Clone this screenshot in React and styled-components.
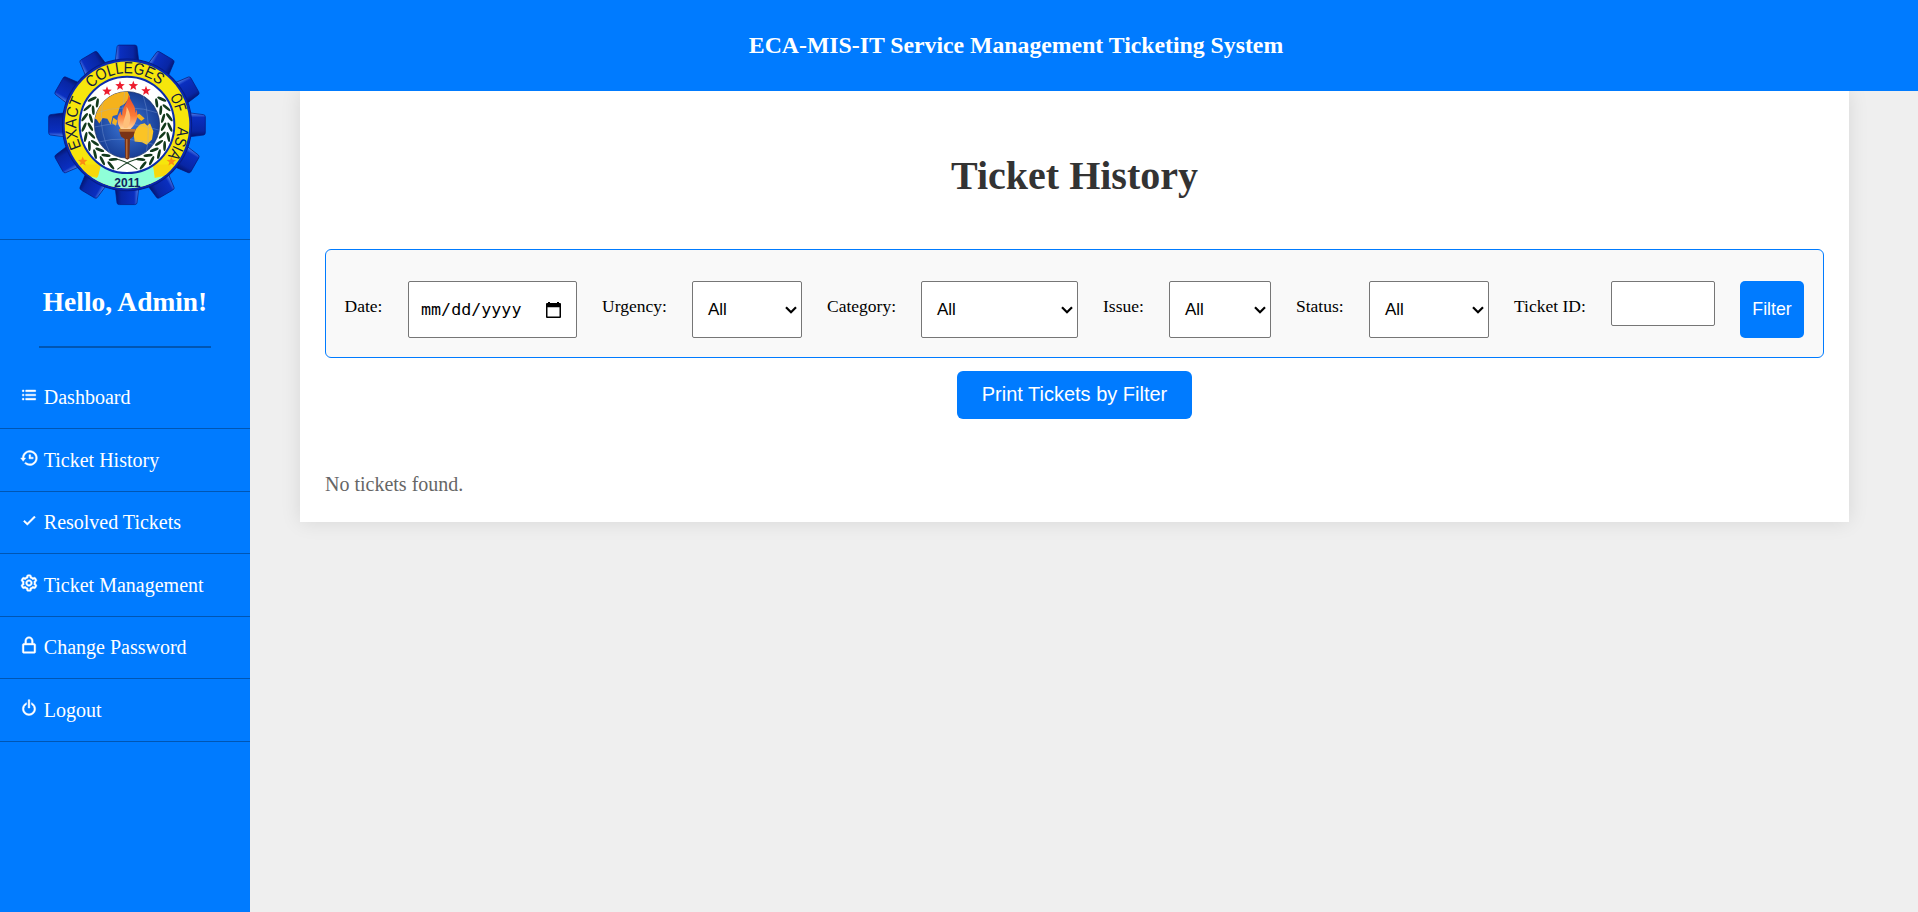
import React from 'react';
import styled, { createGlobalStyle } from 'styled-components';
import { BiListUl, BiHistory, BiCheck, BiCog, BiLockAlt, BiPowerOff } from 'react-icons/bi';

const GlobalStyle = createGlobalStyle`
  *, *::before, *::after { box-sizing: border-box; }
  html, body { margin: 0; padding: 0; }
  body {
    background: #efefef;
    font-family: 'Liberation Serif', 'Times New Roman', serif;
    overflow: hidden;
  }
`;

const Layout = styled.div`
  display: flex;
  height: 100vh;
`;

const Sidebar = styled.aside`
  width: 250px;
  flex: none;
  background: #007bff;
  color: #fff;
`;

const LogoArea = styled.div`
  height: 240px;
  padding: 40px 0 0 45px;
  border-bottom: 1px solid #0056b3;
`;

const Greeting = styled.h2`
  width: 172px;
  height: 108px;
  margin: 0 auto 18.5px;
  padding-top: 46px;
  border-bottom: 2px solid #0056b3;
  font-size: 27.4px;
  line-height: 32px;
  text-align: center;
  white-space: nowrap;
`;

const Nav = styled.nav`
  display: flex;
  flex-direction: column;
`;

const NavItem = styled.a`
  display: flex;
  gap: 4.8px;
  height: 62.5px;
  padding: 18.8px 19px 0;
  border-bottom: 1px solid #0056b3;
  font-size: 20px;
  line-height: 24px;
  color: #fff;
  white-space: nowrap;

  svg { width: 20px; height: 20px; flex: none; stroke: #fff; stroke-width: 0.5px; }
`;

const Main = styled.main`
  flex: 1;
  min-width: 0;
`;

const Header = styled.header`
  height: 91px;
  padding: 0 136px 2px 0;
  display: flex;
  align-items: center;
  justify-content: center;
  background: #007bff;
  color: #fff;
`;

const HeaderTitle = styled.h1`
  margin: 0;
  font-size: 23.75px;
  line-height: 28px;
`;

const Panel = styled.section`
  height: 431px;
  margin: 0 69px 0 50px;
  padding: 62px 25px 0;
  display: flex;
  flex-direction: column;
  background: #fff;
  box-shadow: 0 0 19px rgba(0, 0, 0, 0.1);
  clip-path: inset(0 -40px -40px -40px);
`;

const PanelTitle = styled.h2`
  margin: 0 0 50px;
  font-size: 40px;
  line-height: 46px;
  text-align: center;
  color: #333;
`;

const FilterBar = styled.form`
  height: 109px;
  display: flex;
  align-items: flex-start;
  gap: 25px;
  padding: 31px 19px 0 18.5px;
  border: 1px solid #007bff;
  border-radius: 6px;
  background: #f9f9f9;
`;

const Label = styled.label`
  flex: none;
  width: ${(p) => p.$width}px;
  padding-top: 15px;
  font-size: 17.5px;
  line-height: 20px;
  color: #000;
  white-space: nowrap;
`;

const Field = styled.div`
  flex: none;
  display: flex;
  align-items: center;
  justify-content: space-between;
  width: ${(p) => p.$width}px;
  height: 57px;
  padding: 0 4px 0 15px;
  border: 1px solid #767676;
  border-radius: 2px;
  background: #fff;
  color: #000;
  font: 17px/19px 'Liberation Sans', Arial, sans-serif;
`;

const DateField = styled(Field)`
  padding: 0 15px 0 12px;
  font-family: 'DejaVu Sans Mono', monospace;
  font-size: 16.7px;
`;

const TextInput = styled.input`
  flex: none;
  width: 104px;
  height: 45px;
  border: 1px solid #767676;
  border-radius: 2px;
  background: #fff;
`;

const Button = styled.button`
  border: 0;
  padding: 0;
  border-radius: 6px;
  background: #007bff;
  color: #fff;
  font-family: 'Liberation Sans', Arial, sans-serif;
`;

const FilterButton = styled(Button)`
  flex: none;
  width: 64px;
  height: 57px;
  border-radius: 5px;
  font-size: 17.7px;
`;

const PrintButton = styled(Button)`
  align-self: center;
  width: 235px;
  height: 48px;
  padding-bottom: 2px;
  margin-top: 13px;
  font-size: 20px;
`;

const Empty = styled.p`
  margin: 53px 0 0;
  font-size: 20px;
  line-height: 24px;
  color: #666;
`;

const Chevron = () => (
  <svg width="12" height="8" viewBox="0 0 12 8" fill="none" stroke="#000" strokeWidth="2.2">
    <path d="M1 1.2 6 6.2 11 1.2" />
  </svg>
);

const CalendarIcon = () => (
  <svg width="15" height="16" viewBox="0 0 15 16">
    <path fillRule="evenodd" d="M2 1V0h2v1h7V0h2v1h1a1 1 0 0 1 1 1v13a1 1 0 0 1-1 1H1a1 1 0 0 1-1-1V2a1 1 0 0 1 1-1zM1.5 5.2v9.3h12V5.2z" />
  </svg>
);

const CX = 291;
const CY = 283;

const star = (x, y, r) =>
  Array.from({ length: 10 }, (_, i) => {
    const a = (Math.PI / 5) * i - Math.PI / 2;
    const d = i % 2 ? r * 0.42 : r;
    return `${(x + d * Math.cos(a)).toFixed(1)},${(y + d * Math.sin(a)).toFixed(1)}`;
  }).join(' ');

const leafAngles = Array.from({ length: 9 }, (_, i) => 22 + i * 13);

const Branch = () => (
  <g>
    {leafAngles.map((a) => (
      <g key={a} transform={`rotate(${a} ${CX} ${CY})`}>
        <ellipse cx={CX} cy={CY + 129} rx="15" ry="4.2" transform={`rotate(28 ${CX} ${CY + 129})`} />
        <ellipse cx={CX} cy={CY + 110} rx="14" ry="4.2" transform={`rotate(-28 ${CX} ${CY + 110})`} />
      </g>
    ))}
  </g>
);

const Laurel = () => (
  <g fill="#123a1c">
    <Branch />
    <g transform={`translate(${CX * 2} 0) scale(-1 1)`}><Branch /></g>
  </g>
);

const words = [
  ['EXACT', 170, 145],
  ['COLLEGES', 358, 225],
  ['OF', 629, 51],
  ['ASIA', 722, 92],
];

const Logo = () => (
  <svg width="164" height="169" viewBox="45 33 492 498" preserveAspectRatio="none" fontFamily="'Liberation Sans', Arial, sans-serif">
    <defs>
      <linearGradient id="tooth" x1="0" x2="1" y1="0" y2="0">
        <stop offset="0" stopColor="#5b8df0" />
        <stop offset="0.2" stopColor="#0a2fc0" />
        <stop offset="0.75" stopColor="#0826a4" />
        <stop offset="1" stopColor="#03136a" />
      </linearGradient>
      <linearGradient id="flame" x1="0" x2="0" y1="0" y2="1">
        <stop offset="0" stopColor="#e8482a" />
        <stop offset="0.6" stopColor="#fb7a35" />
        <stop offset="1" stopColor="#ffd9a0" />
      </linearGradient>
      <radialGradient id="sea">
        <stop offset="0" stopColor="#3d78d8" />
        <stop offset="1" stopColor="#193f96" />
      </radialGradient>
      <clipPath id="globe"><circle cx={CX} cy={CY} r="98" /></clipPath>
      <clipPath id="ring"><circle cx={CX} cy={CY} r="187" /></clipPath>
      <path id="ringText" d={`M${CX} ${CY + 152}a152 152 0 0 1 0-304a152 152 0 0 1 0 304`} />
    </defs>
    {Array.from({ length: 12 }, (_, i) => (
      <path
        key={i}
        d={`M${CX - 36} 102L${CX - 30} 53Q${CX - 29} 48 ${CX - 23} 48H${CX + 23}Q${CX + 29} 48 ${CX + 30} 53L${CX + 36} 102z`}
        fill="url(#tooth)"
        stroke="#04177a"
        strokeWidth="2"
        transform={`rotate(${i * 30} ${CX} ${CY})`}
      />
    ))}
    <circle cx={CX} cy={CY} r="194" fill="#0a28b0" stroke="#061c86" strokeWidth="3" />
    <circle cx={CX} cy={CY} r="187" fill="#f6e60c" />
    <g clipPath="url(#ring)">
      <path d="M213 400L201 440L160 430V490H422V430L374 440L369 400z" fill="#8fffd8" />
      <path d="M213 400L204 436L160 430V400zM369 400L376 436L422 430V400z" fill="#f8d80c" />
    </g>
    <circle cx={CX} cy={CY} r="142" fill="#fff" stroke="#0b2caa" strokeWidth="6" />
    <g fontSize="48" fill="#111b3a">
      {words.map(([text, offset, length]) => (
        <text key={text} textLength={length} lengthAdjust="spacingAndGlyphs">
          <textPath href="#ringText" startOffset={offset} textLength={length} lengthAdjust="spacingAndGlyphs">{text}</textPath>
        </text>
      ))}
    </g>
    <text x="292" y="466" fontSize="36" fontWeight="700" textAnchor="middle" fill="#0f245f">2011</text>
    <Laurel />
    <path d="M262 414Q300 385 330 384M322 414Q282 385 252 384" fill="none" stroke="#173f22" strokeWidth="3" />
    <circle cx={CX} cy={CY} r="98" fill="url(#sea)" stroke="#1b2f60" strokeWidth="2" />
    <g clipPath="url(#globe)">
      <path d="M190 262l10-36 22-30 30-15 38-2 10 22-16 20-14 8-8 24-14 4-6 26-10-18-14-2-10 16-8-12z" fill="#f5b21c" />
      <path d="M310 304l20-22 14-4 8 8 8-8 10 24-4 24-16 16-14-8-22-2z" fill="#fbc425" />
      <path d="M250 262l12 8-4 16-12-8zM316 256l12-6 16 14-10 8zM270 292l18 3v4l-18-3z" fill="#f5b21c" />
      <g fill="none" stroke="#93aee0" strokeWidth="1.5" opacity="0.65">
        <path d="M190 250Q290 215 392 250M190 290Q290 265 392 300M200 335Q290 310 384 345M230 180Q190 283 250 385M285 180Q265 283 300 385M335 180Q370 283 345 385" />
      </g>
    </g>
    <path d="M296 194C304 220 318 226 316 248C320 242 319 236 318 234C330 264 312 286 300 297H275C258 280 260 258 272 244C272 252 274 254 277 256C274 230 294 220 296 194z" fill="url(#flame)" />
    <path d="M290 230C302 250 306 270 292 292H282C274 274 290 262 290 230z" fill="#ffc07a" />
    <path d="M266 295h51l-7 22-10 8-2 57-6 4-6-4-2-57-11-8z" fill="#7a3316" />
    <path d="M266 295h51l-2 8h-47z" fill="#c27735" />
    <path d="M289 325h3v56h-3z" fill="#d88748" />
    <g fill="#ed1c2e">
      <polygon points={star(231, 184, 15)} />
      <polygon points={star(270, 168, 15)} />
      <polygon points={star(310, 168, 15)} />
      <polygon points={star(348, 183, 15)} />
    </g>
    <g fill="#fb8c14">
      <polygon points={star(158, 391, 15)} />
      <polygon points={star(424, 391, 15)} />
    </g>
  </svg>
);

const links = [
  ['Dashboard', BiListUl],
  ['Ticket History', BiHistory],
  ['Resolved Tickets', BiCheck],
  ['Ticket Management', BiCog],
  ['Change Password', BiLockAlt],
  ['Logout', BiPowerOff],
];

const selects = [
  ['Urgency:', 65, 110],
  ['Category:', 69, 157],
  ['Issue:', 41, 102],
  ['Status:', 48, 120],
];

export default function App() {
  return (
    <>
      <GlobalStyle />
      <Layout>
        <Sidebar>
          <LogoArea><Logo /></LogoArea>
          <Greeting>Hello, Admin!</Greeting>
          <Nav>
            {links.map(([text, Icon]) => (
              <NavItem key={text}><Icon /><span>{text}</span></NavItem>
            ))}
          </Nav>
        </Sidebar>
        <Main>
          <Header><HeaderTitle>ECA-MIS-IT Service Management Ticketing System</HeaderTitle></Header>
          <Panel>
            <PanelTitle>Ticket History</PanelTitle>
            <FilterBar>
              <Label $width={38.5}>Date:</Label>
              <DateField $width={169}><span>mm/dd/yyyy</span><CalendarIcon /></DateField>
              {selects.map(([text, labelWidth, width]) => (
                <React.Fragment key={text}>
                  <Label $width={labelWidth}>{text}</Label>
                  <Field $width={width}><span>All</span><Chevron /></Field>
                </React.Fragment>
              ))}
              <Label $width={72}>Ticket ID:</Label>
              <TextInput />
              <FilterButton type="button">Filter</FilterButton>
            </FilterBar>
            <PrintButton type="button">Print Tickets by Filter</PrintButton>
            <Empty>No tickets found.</Empty>
          </Panel>
        </Main>
      </Layout>
    </>
  );
}
